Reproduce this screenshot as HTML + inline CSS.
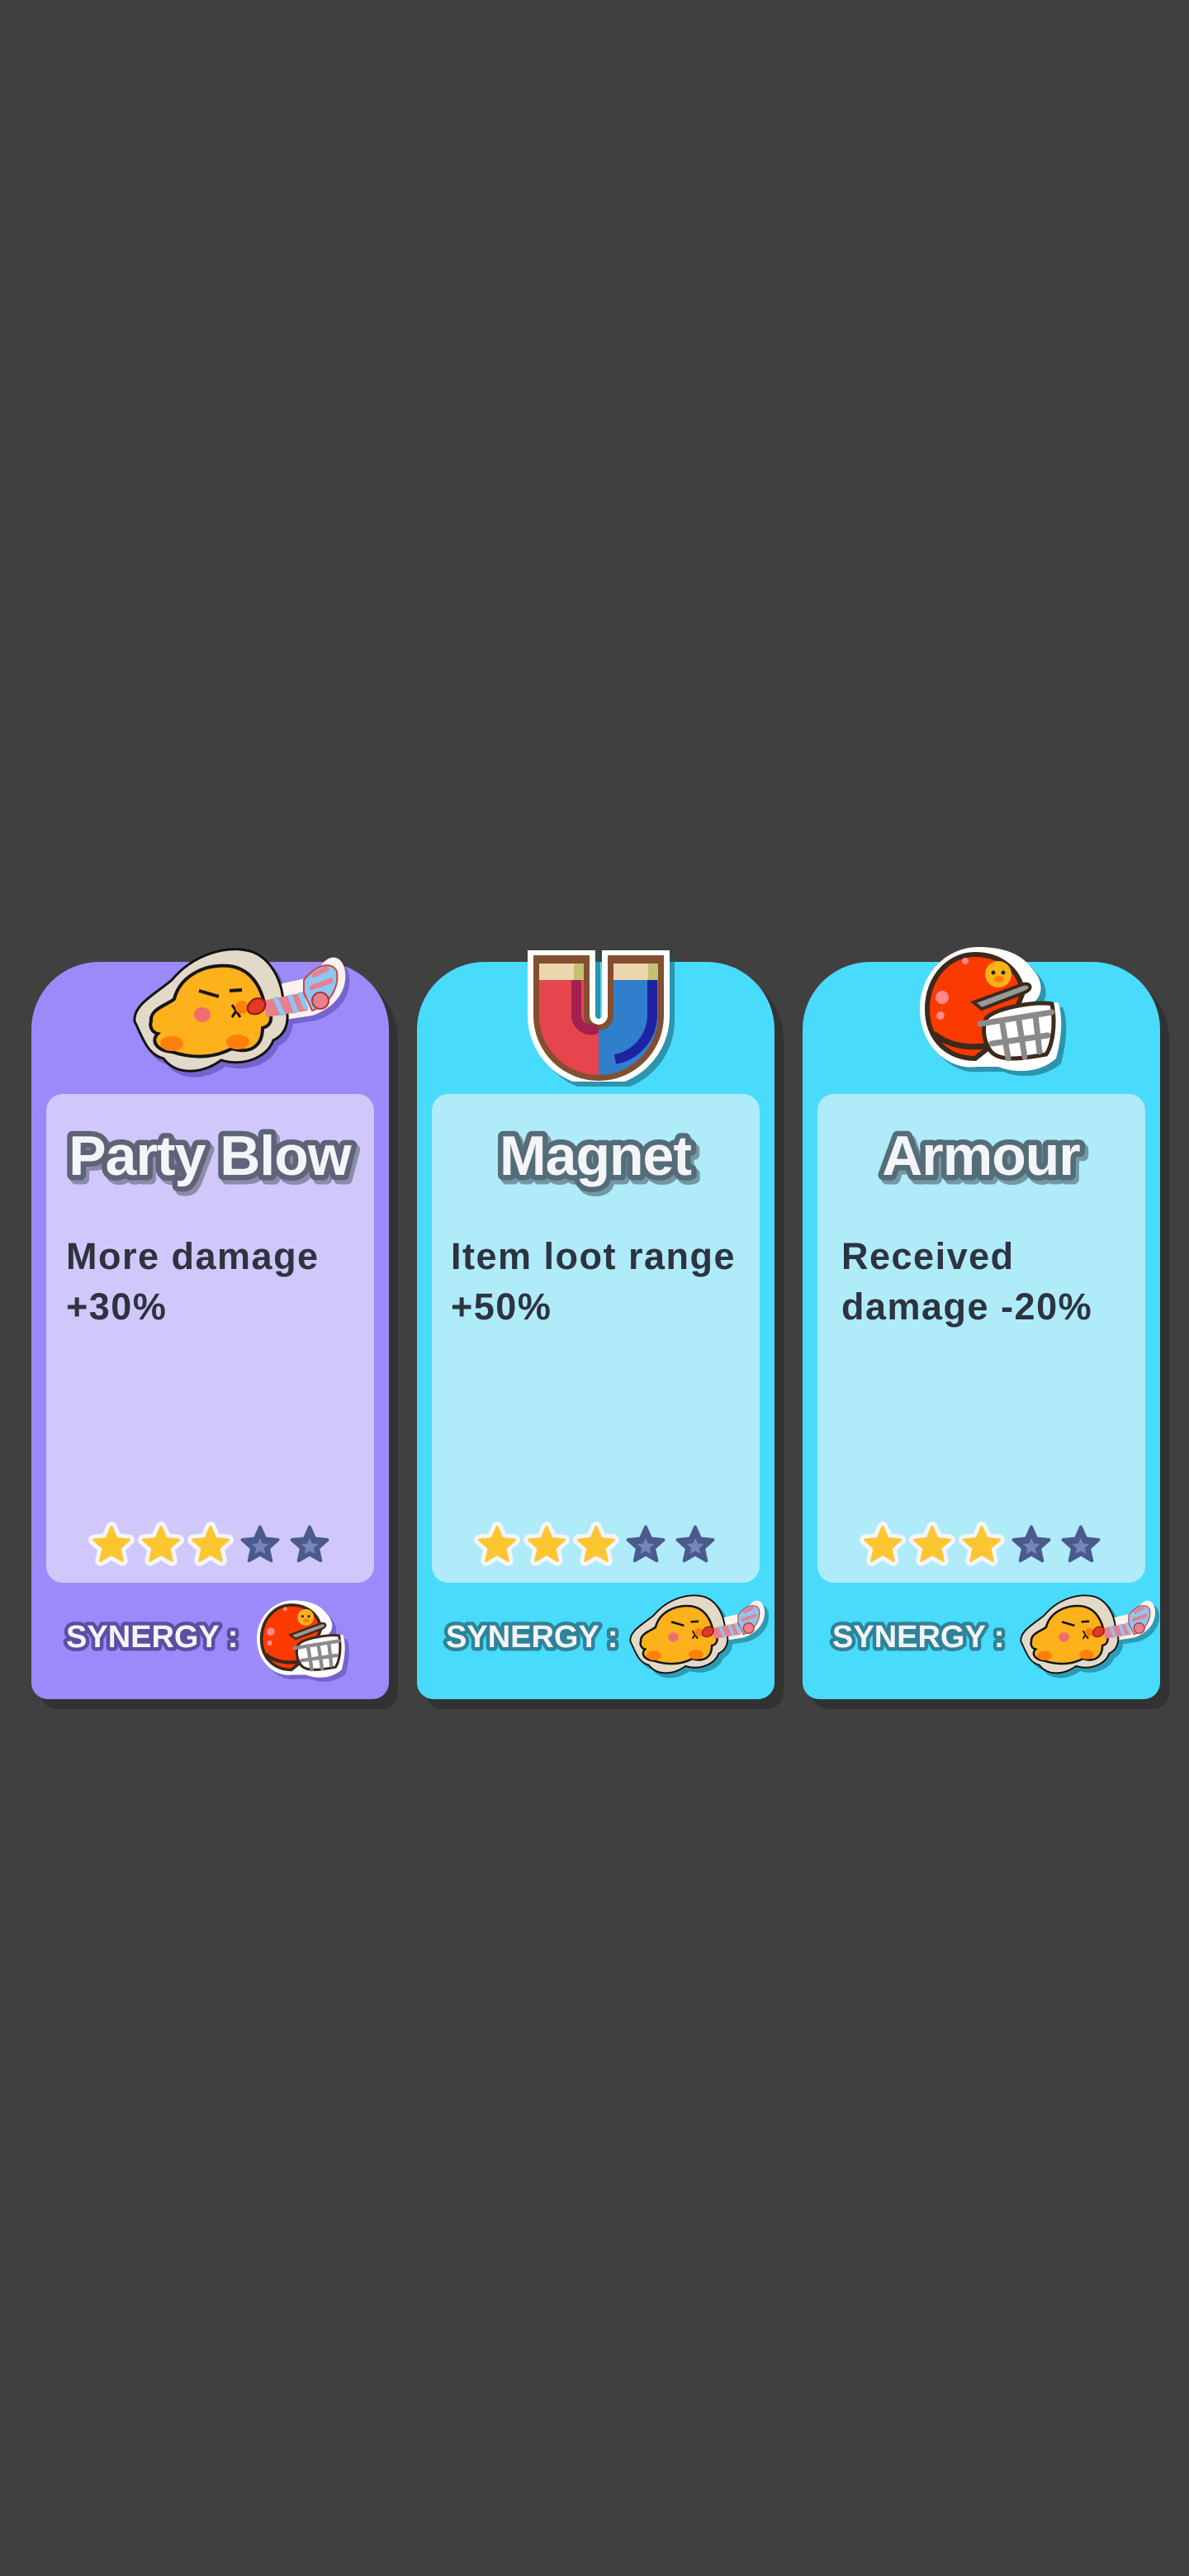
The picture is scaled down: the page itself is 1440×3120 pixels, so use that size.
<!DOCTYPE html>
<html><head><meta charset="utf-8">
<style>
html,body{margin:0;padding:0;background:#404040;}
body{width:1440px;height:3120px;position:relative;overflow:hidden;font-family:"Liberation Sans",sans-serif;}
.card{position:absolute;top:1165px;width:433px;height:893px;border-radius:82px 82px 20px 20px;box-shadow:11px 12px 0 rgba(0,0,0,.22);}
.purple{background:#9c8afb;}
.cyan{background:#49dbfb;}
.panel{position:absolute;left:18px;top:160px;width:397px;height:592px;border-radius:20px;}
.purple .panel{background:#d0c8fb;}
.cyan .panel{background:#afebf9;}
.title{position:absolute;top:1350px;}
.title text{font-family:"Liberation Sans",sans-serif;font-size:68px;font-weight:bold;letter-spacing:-1px;stroke-linejoin:round;paint-order:stroke fill;}
.desc{position:absolute;top:1491px;font-size:45px;font-weight:bold;color:#2d333f;letter-spacing:1.5px;line-height:61px;white-space:nowrap;}
.syn{position:absolute;top:1950px;}
.syn text{font-family:"Liberation Sans",sans-serif;font-size:38px;font-weight:bold;stroke-linejoin:round;paint-order:stroke fill;}
.stars{position:absolute;top:1842px;}
.ic{position:absolute;}
</style></head><body>
<svg width="0" height="0" style="position:absolute">
<defs>
<path id="st" d="M0,-45 L12.3,-17 L42.8,-13.9 L20,6.5 L26.5,36.4 L0,21 L-26.5,36.4 L-20,6.5 L-42.8,-13.9 L-12.3,-17 Z"/>
<symbol id="sf" viewBox="-60 -60 120 120">
<use href="#st" fill="#f4f5f9" stroke="#f4f5f9" stroke-width="26" stroke-linejoin="round"/>
<use href="#st" fill="#fcc630" stroke="#fcc630" stroke-width="6" stroke-linejoin="round"/>
</symbol>
<symbol id="se" viewBox="-60 -60 120 120">
<use href="#st" fill="#4a5a8c" stroke="#4a5a8c" stroke-width="8" stroke-linejoin="round"/>
<use href="#st" fill="#7785b8" transform="scale(0.48) translate(0,6)"/>
</symbol>
<symbol id="blow" viewBox="0 0 270 165">
<path d="M150,58 L230,40 C240,10 262,12 265,35 C268,60 250,80 225,88 L160,98 C140,98 138,62 150,58Z" fill="#fdf3ee"/>
<path d="M10,95 C8,75 35,62 55,45 C80,15 120,2 150,10 C175,18 188,45 190,70 C200,90 195,110 178,118 C170,140 140,150 115,142 C90,160 60,160 45,140 C25,135 20,115 10,95Z" fill="#e2d9c8" stroke="#111" stroke-width="3"/>
<path d="M30,95 C28,80 50,75 58,68 C65,40 95,25 125,28 C155,32 165,60 168,78 C178,85 178,100 165,103 C165,125 150,135 128,128 C105,140 80,140 55,132 C35,130 30,118 38,110 C30,108 28,100 30,95Z" fill="#fdb11a" stroke="#151515" stroke-width="4"/>
<ellipse cx="55" cy="122" rx="14" ry="9" fill="#ff7f0a"/>
<ellipse cx="135" cy="120" rx="14" ry="9" fill="#ff7f0a"/>
<ellipse cx="92" cy="87" rx="10" ry="9" fill="#f26d72"/>
<path d="M88,58 L112,65 M125,58 L140,57" stroke="#151515" stroke-width="4" fill="none"/>
<path d="M128,75 L138,90 M138,75 L128,90" stroke="#151515" stroke-width="3"/>
<circle cx="140" cy="78" r="8" fill="#ff7f0a"/>
<path d="M165,70 L215,60 L220,82 L170,90Z" fill="#e87e8e"/>
<path d="M180,66 L190,88 M198,63 L206,85 M210,60 L218,80" stroke="#8ec6f0" stroke-width="6"/>
<path d="M215,45 C230,25 250,22 255,35 C258,55 245,75 225,82 L215,60Z" fill="#8ec6f0" stroke="#c44" stroke-width="2"/>
<path d="M225,40 L245,30 M222,55 L250,45" stroke="#e87e8e" stroke-width="6"/>
<circle cx="235" cy="70" r="10" fill="#e87e8e" stroke="#a33" stroke-width="2"/>
<path d="M150,72 C155,65 165,66 168,72 C170,80 162,88 152,86 C145,84 146,76 150,72Z" fill="#e23a22" stroke="#8a1a10" stroke-width="2"/>
</symbol>
<symbol id="helm" viewBox="0 0 180 160">
<path d="M75,5 C40,5 5,35 5,80 C5,125 40,155 75,150 L100,150 C120,158 150,158 170,140 C178,110 178,85 172,72 L140,75 C160,60 150,40 140,30 C125,10 100,5 75,5Z" fill="#fff"/>
<path d="M72,14 C40,14 14,42 14,80 C14,118 40,140 72,140 L110,110 L130,60 C125,30 100,14 72,14Z" fill="#fb3a00" stroke="#3d2a1c" stroke-width="6"/>
<path d="M22,110 C40,125 70,130 95,122" stroke="#3d2a1c" stroke-width="7" fill="none"/>
<circle cx="100" cy="38" r="16" fill="#fdb11a"/>
<circle cx="94" cy="36" r="2.5" fill="#222"/><circle cx="106" cy="36" r="2.5" fill="#222"/>
<ellipse cx="101" cy="44" rx="6" ry="4" fill="#ff7f0a"/>
<circle cx="32" cy="66" r="8" fill="#f88"/><circle cx="30" cy="88" r="5" fill="#f88"/><circle cx="60" cy="22" r="4" fill="#f88"/>
<path d="M70,72 L130,50 C140,48 142,56 132,60 L80,80Z" fill="#999" stroke="#3d2a1c" stroke-width="4"/>
<path d="M85,92 C95,78 150,70 165,74 C170,100 165,125 158,135 C130,140 100,145 90,130 C80,115 82,100 85,92Z" fill="#fff" stroke="#3d2a1c" stroke-width="5"/>
<path d="M78,98 L165,84 M92,122 L160,112 M105,98 L112,140 M125,94 L132,138 M145,88 L150,132" stroke="#8a8a8a" stroke-width="7" fill="none" stroke-linecap="round"/>
</symbol>
<clipPath id="lh"><rect x="0" y="0" width="90" height="170"/></clipPath>
<clipPath id="rh"><rect x="90" y="0" width="90" height="170"/></clipPath>
<symbol id="mag" viewBox="0 0 180 165">
<path d="M45,6 V85 A45,45 0 0 0 135,85 V6" stroke="#fff" stroke-width="82" fill="none"/>
<path d="M45,12 V85 A45,45 0 0 0 135,85 V12" stroke="#834f30" stroke-width="68" fill="none"/>
<g clip-path="url(#lh)"><path d="M45,22 V85 A45,45 0 0 0 135,85 V22" stroke="#e7454e" stroke-width="54" fill="none"/>
<path d="M63,22 V85 A18,18 0 0 0 90,100" stroke="#a32150" stroke-width="12" fill="none"/></g>
<g clip-path="url(#rh)"><path d="M45,22 V85 A45,45 0 0 0 135,85 V22" stroke="#2f7fcd" stroke-width="54" fill="none"/>
<path d="M155,22 V85 A55,55 0 0 1 110,138" stroke="#1f22a3" stroke-width="12" fill="none"/></g>
<rect x="18" y="22" width="54" height="20" fill="#ecd6ad"/><rect x="108" y="22" width="54" height="20" fill="#ecd6ad"/>
<rect x="60" y="22" width="12" height="20" fill="#c4c074"/><rect x="150" y="22" width="12" height="20" fill="#c4c074"/>
</symbol>
</defs>
</svg>

<div class="card purple" style="left:38px"><div class="panel"></div></div>
<div class="card cyan" style="left:505px"><div class="panel"></div></div>
<div class="card cyan" style="left:972px"><div class="panel"></div></div>

<svg class="ic" style="left:153px;top:1142px;filter:drop-shadow(5px 6px 0 rgba(60,40,140,.4))" width="270" height="165"><use href="#blow"/></svg>
<svg class="ic" style="left:635px;top:1145px;filter:drop-shadow(6px 6px 0 rgba(20,90,110,.55))" width="180" height="165"><use href="#mag"/></svg>
<svg class="ic" style="left:1108px;top:1142px;filter:drop-shadow(6px 6px 0 rgba(20,90,110,.55))" width="182" height="160"><use href="#helm"/></svg>

<svg class="title" style="left:38px" width="433" height="100">
<text x="220" y="78" text-anchor="middle" fill="#7a7e96" stroke="#7a7e96" stroke-width="13" opacity="0.8">Party Blow</text>
<text x="216" y="73" text-anchor="middle" fill="#f4f5f9" stroke="#5e6378" stroke-width="13">Party Blow</text></svg>
<svg class="title" style="left:505px" width="433" height="100">
<text x="220" y="78" text-anchor="middle" fill="#66838f" stroke="#66838f" stroke-width="13" opacity="0.8">Magnet</text>
<text x="216" y="73" text-anchor="middle" fill="#f4f5f9" stroke="#556d79" stroke-width="13">Magnet</text></svg>
<svg class="title" style="left:972px" width="433" height="100">
<text x="220" y="78" text-anchor="middle" fill="#66838f" stroke="#66838f" stroke-width="13" opacity="0.8">Armour</text>
<text x="216" y="73" text-anchor="middle" fill="#f4f5f9" stroke="#556d79" stroke-width="13">Armour</text></svg>

<div class="desc" style="left:80px">More damage<br>+30%</div>
<div class="desc" style="left:546px">Item loot range<br>+50%</div>
<div class="desc" style="left:1019px">Received<br>damage -20%</div>

<div class="stars" style="left:105px"><svg width="300" height="60">
<use href="#sf" x="0" y="0" width="60" height="60"/><use href="#sf" x="60" y="0" width="60" height="60"/><use href="#sf" x="120" y="0" width="60" height="60"/><use href="#se" x="180" y="0" width="60" height="60"/><use href="#se" x="240" y="0" width="60" height="60"/></svg></div>
<div class="stars" style="left:572px"><svg width="300" height="60">
<use href="#sf" x="0" y="0" width="60" height="60"/><use href="#sf" x="60" y="0" width="60" height="60"/><use href="#sf" x="120" y="0" width="60" height="60"/><use href="#se" x="180" y="0" width="60" height="60"/><use href="#se" x="240" y="0" width="60" height="60"/></svg></div>
<div class="stars" style="left:1039px"><svg width="300" height="60">
<use href="#sf" x="0" y="0" width="60" height="60"/><use href="#sf" x="60" y="0" width="60" height="60"/><use href="#sf" x="120" y="0" width="60" height="60"/><use href="#se" x="180" y="0" width="60" height="60"/><use href="#se" x="240" y="0" width="60" height="60"/></svg></div>

<svg class="syn" style="left:74px" width="240" height="60"><text x="6" y="45" fill="#f4f5f9" stroke="#5a4fa3" stroke-width="9">SYNERGY :</text></svg>
<svg class="syn" style="left:534px" width="240" height="60"><text x="6" y="45" fill="#f4f5f9" stroke="#2f8398" stroke-width="9">SYNERGY :</text></svg>
<svg class="syn" style="left:1002px" width="240" height="60"><text x="6" y="45" fill="#f4f5f9" stroke="#2f8398" stroke-width="9">SYNERGY :</text></svg>

<svg class="ic" style="left:308px;top:1935px;filter:drop-shadow(5px 5px 0 rgba(60,40,140,.4))" width="112" height="100"><use href="#helm"/></svg>
<svg class="ic" style="left:757px;top:1927px;filter:drop-shadow(5px 5px 0 rgba(20,90,110,.5))" width="172" height="106"><use href="#blow"/></svg>
<svg class="ic" style="left:1230px;top:1927px;filter:drop-shadow(5px 5px 0 rgba(20,90,110,.5))" width="172" height="106"><use href="#blow"/></svg>
</body></html>
